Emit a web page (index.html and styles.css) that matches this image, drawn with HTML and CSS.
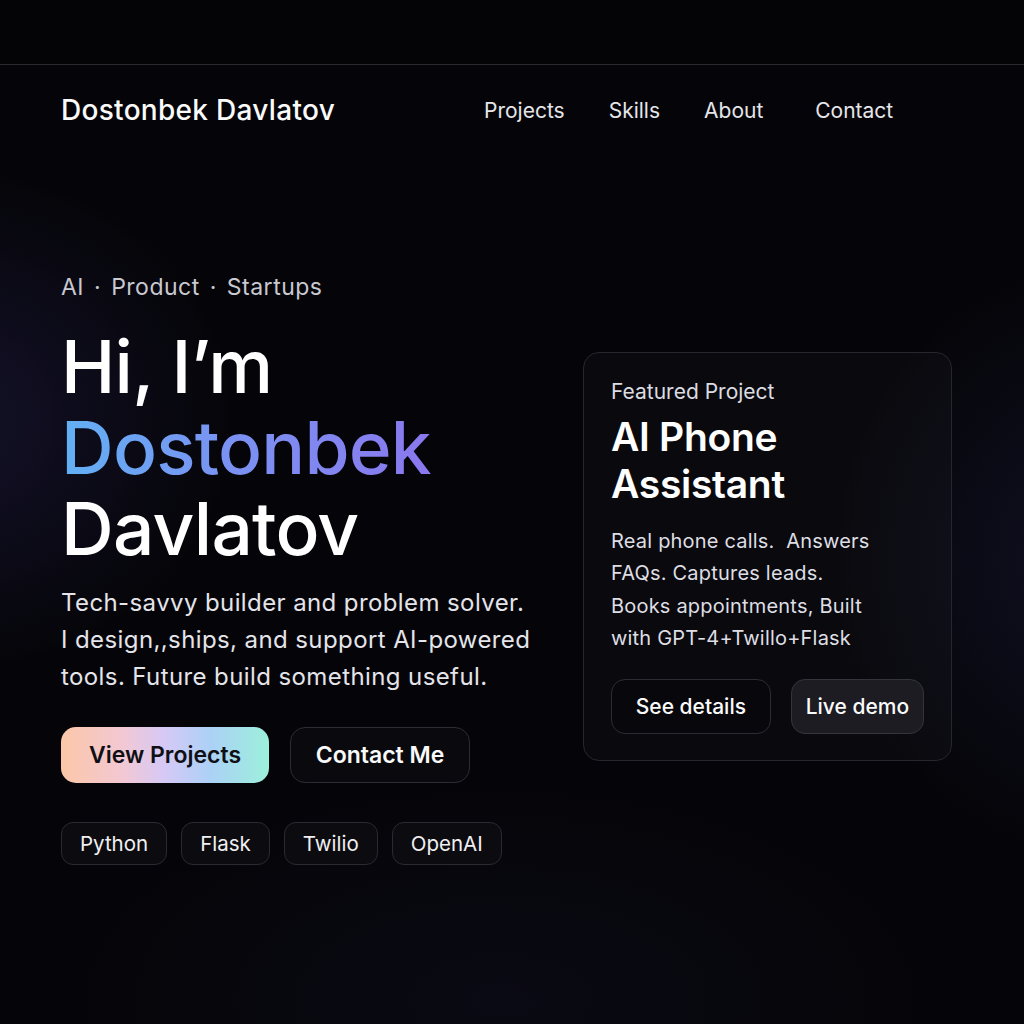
FILE: index.html
```html
<!DOCTYPE html>
<html lang="en">
<head>
<meta charset="utf-8">
<title>Dostonbek Davlatov</title>
<link rel="stylesheet" href="styles.css">
</head>
<body>
<div class="topstrip"></div>
<header class="nav">
  <div class="brand">Dostonbek Davlatov</div>
  <nav class="links">
    <a href="#">Projects</a>
    <a href="#">Skills</a>
    <a href="#">About</a>
    <a href="#" class="contact">Contact</a>
  </nav>
</header>
<main class="hero">
  <section class="intro">
    <p class="tagline">AI <span class="sep">·</span> Product <span class="sep">·</span> Startups</p>
    <h1 class="title">Hi, I’m<br><span class="grad">Dostonbek</span><br>Davlatov</h1>
    <p class="lead">Tech-savvy builder and problem solver.<br>I design,,ships, and support AI-powered<br>tools. Future build something useful.</p>
    <div class="actions">
      <a href="#" class="btn btn-primary">View Projects</a>
      <a href="#" class="btn btn-ghost">Contact Me</a>
    </div>
    <ul class="tags">
      <li>Python</li>
      <li>Flask</li>
      <li>Twilio</li>
      <li>OpenAI</li>
    </ul>
  </section>
  <aside class="card">
    <p class="card-label">Featured Project</p>
    <h2 class="card-title">AI Phone<br>Assistant</h2>
    <p class="card-desc">Real phone calls.&nbsp; Answers<br>FAQs. Captures leads.<br>Books appointments, Built<br>with GPT-4+Twillo+Flask</p>
    <div class="card-actions">
      <a href="#" class="cbtn">See details</a>
      <a href="#" class="cbtn cbtn-alt">Live demo</a>
    </div>
  </aside>
</main>
</body>
</html>
```
FILE: styles.css
```css
* { box-sizing: border-box; }
html, body { margin: 0; padding: 0; }
body {
  width: 1024px;
  height: 1024px;
  overflow: hidden;
  font-family: Inter, "Noto Sans", sans-serif;
  color: #f4f4f6;
  background:
    radial-gradient(ellipse 420px 360px at -60px 420px, rgba(58, 48, 120, 0.30), rgba(0,0,0,0) 70%),
    radial-gradient(ellipse 380px 420px at 1100px 560px, rgba(48, 44, 100, 0.28), rgba(0,0,0,0) 70%),
    radial-gradient(ellipse 600px 300px at 500px 1000px, rgba(20, 18, 40, 0.35), rgba(0,0,0,0) 70%),
    #050509;
}
a { color: inherit; text-decoration: none; }

.topstrip {
  height: 65px;
  background: #040406;
  border-bottom: 1px solid #2a2a30;
}

.nav {
  display: flex;
  align-items: center;
  padding: 0 61px;
  height: 90px;
}
.brand {
  font-size: 28px;
  font-weight: 500;
  letter-spacing: 0.3px;
  color: #fafafa;
}
.links {
  display: flex;
  margin-left: 149px;
  font-size: 21px;
  color: #e6e6ea;
}
.links a { margin-right: 44px; }
.links a.contact { margin-left: 8px; }

.hero {
  display: flex;
  align-items: flex-start;
  padding: 0 0 0 61px;
  margin-top: 117px;
}
.intro { width: 522px; }
.tagline {
  margin: 0;
  font-size: 23px;
  line-height: 30px;
  letter-spacing: 0.5px;
  color: #c9c9d1;
}
.sep { padding: 0 3px; }
.title {
  margin: 24px 0 0;
  font-size: 73px;
  font-weight: 500;
  line-height: 81px;
  letter-spacing: -0.8px;
  color: #ffffff;
}
.grad {
  background: linear-gradient(90deg, #62b0f4 0%, #7a92f2 45%, #8a78ee 100%);
  -webkit-background-clip: text;
  background-clip: text;
  color: transparent;
}
.lead {
  margin: 15px 0 0;
  font-size: 24px;
  line-height: 37px;
  letter-spacing: 0.4px;
  color: #e4e4ea;
}
.actions {
  display: flex;
  gap: 21px;
  margin-top: 32px;
}
.btn {
  display: flex;
  align-items: center;
  justify-content: center;
  height: 56px;
  border-radius: 15px;
  font-size: 23px;
  font-weight: 600;
}
.btn-primary {
  width: 208px;
  color: #101014;
  background: linear-gradient(90deg, #fcc7a8 0%, #f2c8d4 30%, #d5c9f6 50%, #acd1f6 72%, #9cf0db 100%);
}
.btn-ghost {
  width: 180px;
  color: #fafafa;
  border: 1px solid #2c2c34;
  background: #0a0a0e;
}
.tags {
  display: flex;
  gap: 14px;
  list-style: none;
  padding: 0;
  margin: 39px 0 0;
}
.tags li {
  height: 43px;
  display: flex;
  align-items: center;
  padding: 0 18px;
  border-radius: 12px;
  border: 1px solid #2a2a32;
  background: #0b0b10;
  font-size: 20.5px;
  color: #f0f0f2;
}

.card {
  margin-top: 80px;
  width: 369px;
  height: 409px;
  padding: 26px 27px 0 27px;
  border-radius: 16px;
  border: 1px solid #26262e;
  background: rgba(255, 255, 255, 0.025);
}
.card-label {
  margin: 0;
  font-size: 21px;
  line-height: 26px;
  color: #dcdce2;
}
.card-title {
  margin: 8px 0 0;
  font-size: 39px;
  font-weight: 600;
  line-height: 47px;
  letter-spacing: -0.3px;
  color: #ffffff;
}
.card-desc {
  margin: 18px 0 0;
  font-size: 20px;
  line-height: 32.3px;
  letter-spacing: 0.2px;
  color: #dedee4;
}
.card-actions {
  display: flex;
  gap: 20px;
  margin-top: 25px;
}
.cbtn {
  display: flex;
  align-items: center;
  justify-content: center;
  height: 55px;
  width: 162px;
  border-radius: 14px;
  border: 1px solid #2c2c34;
  background: #08080c;
  font-size: 21px;
  font-weight: 500;
  color: #fafafa;
}
.cbtn-alt {
  width: 135px;
  background: #1c1c22;
  border-color: #34343c;
}
```
